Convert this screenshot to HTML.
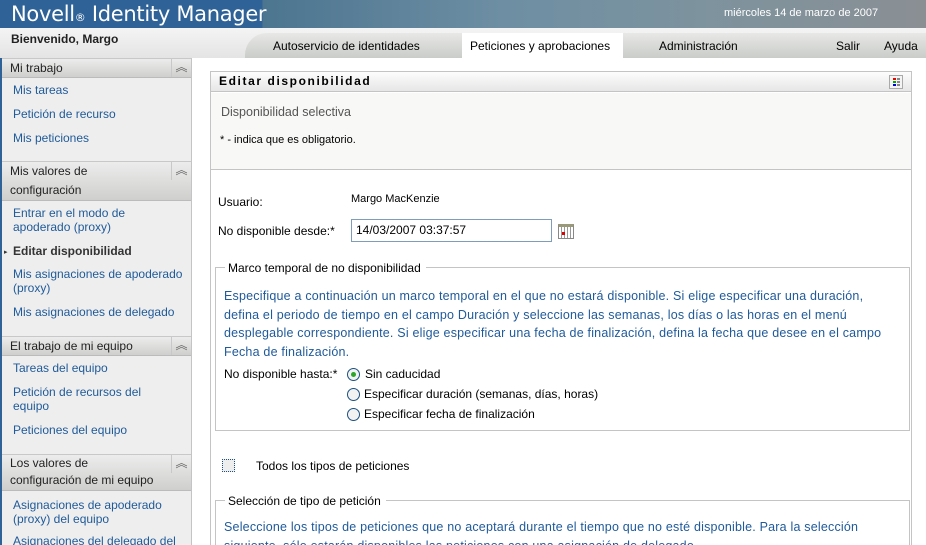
<!DOCTYPE html>
<html style="width:926px;height:545px;overflow:hidden"><head><meta charset="utf-8"><style>
*{margin:0;padding:0;box-sizing:border-box}
body{width:926px;height:545px;overflow:hidden;font-family:"Liberation Sans","DejaVu Sans",sans-serif;font-size:12px;color:#000;background:#fff;position:relative}
.a{position:absolute;white-space:nowrap}
#hdr{left:0;top:0;width:926px;height:28px;background:linear-gradient(90deg,#2f6296 0,#2f6296 262px,#4c7590 263px,#6d8ea3 500px,#7d939e 700px,#8a8f94 926px)}
#bar{left:0;top:28px;width:926px;height:30px;background:linear-gradient(#f4f4f4,#e4e4e4)}
#tabs{left:245px;top:33px;width:681px;height:25px;background:linear-gradient(#e8e8e6,#c9ccc8);border-radius:22px 0 0 0}
#side{left:2px;top:58px;width:190px;height:487px;background:#eeeeee;border-right:1px solid #c4c4c4}
.sh{position:absolute;left:2px;width:189px;background:linear-gradient(#ececec,#cfd0cd);border-top:1px solid #c8c8c8;border-bottom:1px solid #bbb;font-size:12px;color:#222;padding-left:8px;line-height:19px}
.sh i{position:absolute;right:0;top:0;width:20px;height:18px;border-left:1px solid #c8c8c8;font-style:normal;text-align:center;color:#666;font-size:12px;line-height:16px}
.lk{position:absolute;left:13px;color:#1f5a9a;font-size:12px;line-height:14px}
.blue{color:#1f5a9a;letter-spacing:0.2px}
</style></head><body>
<div style="position:absolute;left:0;top:0;width:2px;height:545px;background:#2f6296"></div>
<div class="a" id="hdr"></div>
<div class="a" style="left:11px;top:2px;color:#fff;font-size:21px;font-family:'DejaVu Sans',sans-serif;letter-spacing:-0.3px">Novell<span style="font-size:11px">®</span> Identity Manager</div>
<div class="a" style="left:724px;top:7px;color:#fff;font-size:11px">miércoles 14 de marzo de 2007</div>
<div class="a" id="bar"></div>
<div class="a" id="tabs"></div>
<div class="a" style="left:11px;top:32px;font-weight:bold;font-size:12px;color:#222">Bienvenido, Margo</div>
<div class="a" style="left:462px;top:33px;width:161px;height:25px;background:#fff"></div>
<div class="a" style="left:273px;top:39px">Autoservicio de identidades</div>
<div class="a" style="left:470px;top:39px">Peticiones y aprobaciones</div>
<div class="a" style="left:659px;top:39px">Administración</div>
<div class="a" style="left:836px;top:39px">Salir</div>
<div class="a" style="left:884px;top:39px">Ayuda</div>

<div class="a" id="side"></div>
<div class="sh" style="top:58px;height:20px">Mi trabajo<i>︽</i></div>
<div class="lk" style="top:83px">Mis tareas</div>
<div class="lk" style="top:107px">Petición de recurso</div>
<div class="lk" style="top:131px">Mis peticiones</div>
<div class="sh" style="top:161px;height:40px">Mis valores de<br>configuración<i>︽</i></div>
<div class="lk" style="top:206px">Entrar en el modo de<br>apoderado (proxy)</div>
<div class="lk" style="top:244px;color:#333;font-weight:bold"><span style="position:absolute;left:-9px;font-size:7px;top:2px">▸</span>Editar disponibilidad</div>
<div class="lk" style="top:267px">Mis asignaciones de apoderado<br>(proxy)</div>
<div class="lk" style="top:305px">Mis asignaciones de delegado</div>
<div class="sh" style="top:336px;height:20px">El trabajo de mi equipo<i>︽</i></div>
<div class="lk" style="top:361px">Tareas del equipo</div>
<div class="lk" style="top:385px">Petición de recursos del<br>equipo</div>
<div class="lk" style="top:423px">Peticiones del equipo</div>
<div class="sh" style="top:454px;height:37px;line-height:17px">Los valores de<br>configuración de mi equipo<i>︽</i></div>
<div class="lk" style="top:498px">Asignaciones de apoderado<br>(proxy) del equipo</div>
<div class="lk" style="top:534px">Asignaciones del delegado del</div>

<div class="a" style="left:210px;top:71px;width:702px;height:474px;border:1px solid #c4c4c4;border-bottom:none"></div>
<div class="a" style="left:211px;top:72px;width:700px;height:20px;background:linear-gradient(#fdfdfd,#e6e6e6);border-bottom:1px solid #c4c4c4"></div>
<div class="a" style="left:219px;top:74px;font-weight:bold;letter-spacing:1.6px;font-size:12px">Editar disponibilidad</div>
<div class="a" style="left:889px;top:75px;width:14px;height:14px;border:1px solid #aaa;background:#f4f4f4"><div style="position:absolute;left:3px;top:2px;width:3px;height:2px;background:#e00;box-shadow:0 3px #0a0,0 6px #00d,4px 0 #888,4px 3px #888,4px 6px #888"></div></div>
<div class="a" style="left:211px;top:93px;width:700px;height:77px;background:#f8f8f6;border-bottom:1px solid #c4c4c4"></div>
<div class="a" style="left:221px;top:105px;color:#555;font-size:12.5px">Disponibilidad selectiva</div>
<div class="a" style="left:220px;top:134px;font-size:11px">* - indica que es obligatorio.</div>

<div class="a" style="left:218px;top:195px">Usuario:</div>
<div class="a" style="left:351px;top:193px;font-size:11px">Margo MacKenzie</div>
<div class="a" style="left:218px;top:224px">No disponible desde:*</div>
<div class="a" style="left:351px;top:219px;width:201px;height:23px;border:1px solid #7f9db9;padding:3px 0 0 4px;font-size:12px">14/03/2007 03:37:57</div>
<div class="a" style="left:558px;top:224px;width:16px;height:15px;border:1px solid #888;background:repeating-linear-gradient(90deg,#fff 0 2px,#999 2px 3px),#fff;border-top:3px solid #9a9a7a"><div style="position:absolute;left:3px;top:5px;width:3px;height:3px;background:#d00"></div></div>

<div class="a" style="left:215px;top:267px;width:695px;height:164px;border:1px solid #c4c4c4"></div>
<div class="a" style="left:225px;top:261px;background:#fff;padding:0 5px 0 3px">Marco temporal de no disponibilidad</div>
<div class="a blue" style="left:224px;top:287px;font-size:12.5px;line-height:18.5px">Especifique a continuación un marco temporal en el que no estará disponible. Si elige especificar una duración,<br>defina el periodo de tiempo en el campo Duración y seleccione las semanas, los días o las horas en el menú<br>desplegable correspondiente. Si elige especificar una fecha de finalización, defina la fecha que desee en el campo<br>Fecha de finalización.</div>
<div class="a" style="left:224px;top:367px">No disponible hasta:*</div>
<div class="a" style="left:347px;top:368px;width:13px;height:13px;border:1px solid #1c5180;border-radius:50%;background:#f2f2f2"><div style="position:absolute;left:3px;top:3px;width:5px;height:5px;border-radius:50%;background:#2aa52a"></div></div>
<div class="a" style="left:365px;top:367px">Sin caducidad</div>
<div class="a" style="left:347px;top:388px;width:13px;height:13px;border:1px solid #1c5180;border-radius:50%;background:#f2f2f2"></div>
<div class="a" style="left:364px;top:387px">Especificar duración (semanas, días, horas)</div>
<div class="a" style="left:347px;top:408px;width:13px;height:13px;border:1px solid #1c5180;border-radius:50%;background:#f2f2f2"></div>
<div class="a" style="left:364px;top:407px">Especificar fecha de finalización</div>

<div class="a" style="left:222px;top:459px;width:13px;height:13px;border:1px dotted #1c5180;background:#eee"></div>
<div class="a" style="left:256px;top:459px">Todos los tipos de peticiones</div>

<div class="a" style="left:215px;top:500px;width:695px;height:45px;border:1px solid #c4c4c4;border-bottom:none"></div>
<div class="a" style="left:225px;top:494px;background:#fff;padding:0 5px 0 3px">Selección de tipo de petición</div>
<div class="a blue" style="left:224px;top:518px;font-size:12.5px;line-height:18.5px">Seleccione los tipos de peticiones que no aceptará durante el tiempo que no esté disponible. Para la selección<br>siguiente, sólo estarán disponibles las peticiones con una asignación de delegado.</div>
</body></html>
